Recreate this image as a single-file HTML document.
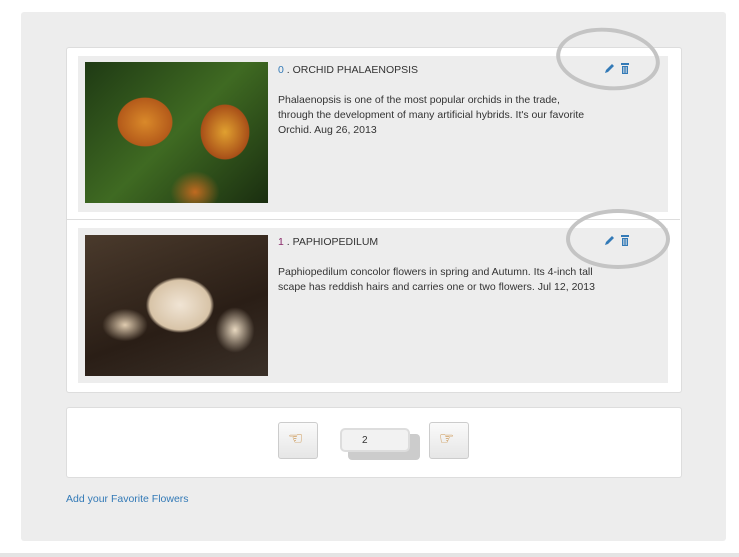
<!DOCTYPE html><html><head><style>
body{margin:0;width:739px;height:557px;background:#fff;font-family:"Liberation Sans",sans-serif;position:relative;overflow:hidden}
.a{position:absolute}
.t{font-size:10.5px;color:#333}
.d{font-size:10.5px;color:#333;line-height:15px;width:310px}
.btn{background:linear-gradient(#fafafa,#e6e6e6);border:1px solid #ccc;border-radius:3px}
</style></head><body>
<div class="a" style="left:21px;top:12px;width:705px;height:529px;background:#ededed;border-radius:3px"></div>
<div class="a" style="left:0;top:553px;width:739px;height:4px;background:#e4e4e4"></div>
<div class="a" style="left:66px;top:47px;width:614px;height:344px;background:#fff;border:1px solid #ddd;border-radius:3px"></div>
<div class="a" style="left:67px;top:219px;width:613px;height:1px;background:#ddd"></div>
<div class="a" style="left:78px;top:56px;width:590px;height:156px;background:#ededed"></div>
<div class="a" style="left:78px;top:228px;width:590px;height:155px;background:#ededed"></div>
<div class="a" style="left:85px;top:62px;width:183px;height:141px;background:radial-gradient(ellipse 45px 40px at 60px 60px,#d9892a,#b45a1a 60%,transparent 62%),radial-gradient(ellipse 40px 45px at 140px 70px,#e0a030,#a84f18 60%,transparent 62%),radial-gradient(ellipse 35px 30px at 110px 130px,#c06a20,transparent 70%),linear-gradient(135deg,#1f3a14,#3f6a22 50%,#1a2e10)"></div>
<div class="a" style="left:85px;top:235px;width:183px;height:141px;background:radial-gradient(ellipse 55px 45px at 95px 70px,#f0e4d4,#d8c4a8 55%,transparent 62%),radial-gradient(ellipse 30px 35px at 150px 95px,#e8d8c0,transparent 65%),radial-gradient(ellipse 35px 25px at 40px 90px,#e0ccb0,transparent 65%),linear-gradient(160deg,#4a3a2c,#2a1e16 60%,#3a3028)"></div>
<div class="a t" style="left:278px;top:64px"><span style="color:#337ab7">0</span> . ORCHID PHALAENOPSIS</div>
<div class="a d" style="left:278px;top:93px">Phalaenopsis is one of the most popular orchids in the trade, through the development of many artificial hybrids. It's our favorite Orchid. Aug 26, 2013</div>
<div class="a t" style="left:278px;top:236px"><span style="color:#8a2a6a">1</span> . PAPHIOPEDILUM</div>
<div class="a d" style="left:278px;top:265px;width:325px">Paphiopedilum concolor flowers in spring and Autumn. Its 4-inch tall scape has reddish hairs and carries one or two flowers. Jul 12, 2013</div>
<div class="a" style="left:556px;top:28px;width:104px;height:62px;border:4px solid #c4c4c4;border-radius:50%;box-sizing:border-box;transform:rotate(6deg)"></div>
<div class="a" style="left:566px;top:209px;width:104px;height:60px;border:4px solid #c4c4c4;border-radius:50%;box-sizing:border-box"></div>
<svg class="a" style="left:603px;top:61px" width="28" height="14"><path d="M2 12l1-3 6-6 2 2-6 6z" fill="#337ab7"/><rect x="18" y="2" width="8" height="2" fill="#337ab7"/><rect x="19" y="5" width="6" height="8" fill="#337ab7"/><path d="M20.5 6v6M22 6v6M23.5 6v6" stroke="#ededed" stroke-width=".6"/></svg>
<svg class="a" style="left:603px;top:233px" width="28" height="14"><path d="M2 12l1-3 6-6 2 2-6 6z" fill="#337ab7"/><rect x="18" y="2" width="8" height="2" fill="#337ab7"/><rect x="19" y="5" width="6" height="8" fill="#337ab7"/><path d="M20.5 6v6M22 6v6M23.5 6v6" stroke="#ededed" stroke-width=".6"/></svg>
<div class="a" style="left:66px;top:407px;width:614px;height:69px;background:#fff;border:1px solid #ddd;border-radius:3px"></div>
<div class="a btn" style="left:278px;top:422px;width:38px;height:35px"></div>
<div class="a btn" style="left:429px;top:422px;width:38px;height:35px"></div>
<div class="a" style="left:288px;top:429px;font-size:17px;color:#c07a20">☜</div>
<div class="a" style="left:439px;top:429px;font-size:17px;color:#c07a20">☞</div>
<div class="a" style="left:348px;top:434px;width:72px;height:26px;background:#ccc;border-radius:4px"></div>
<div class="a" style="left:340px;top:428px;width:70px;height:24px;background:#f2f2f2;border:2px solid #ddd;border-radius:5px;box-sizing:border-box;font-size:10px;color:#333;padding:5px 0 0 20px">2</div>
<div class="a" style="left:66px;top:493px;font-size:10.5px;color:#337ab7">Add your Favorite Flowers</div>
</body></html>
